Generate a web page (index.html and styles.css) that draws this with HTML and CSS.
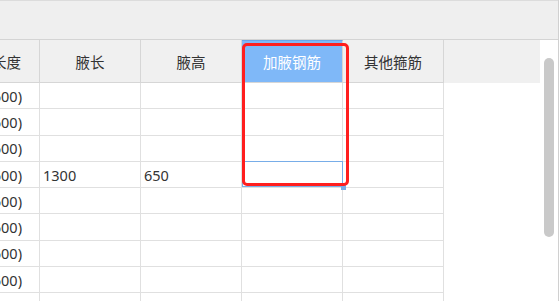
FILE: index.html
```html
<!DOCTYPE html>
<html lang="zh-CN">
<head>
<meta charset="utf-8">
<title>加腋参数</title>
<link rel="stylesheet" href="styles.css">
</head>
<body>
<div class="window">
  <div class="topbar"></div>
  <div class="main">
    <div class="grid">
      <div class="table">
        <div class="hrow">
          <div class="hcell c0">构件长度</div>
          <div class="hcell">腋长</div>
          <div class="hcell">腋高</div>
          <div class="hcell active">加腋钢筋</div>
          <div class="hcell">其他箍筋</div>
          <div class="hfill"></div>
        </div>
        <div class="brow"><div class="bcell c0">1500(600)</div><div class="bcell"></div><div class="bcell"></div><div class="bcell"></div><div class="bcell"></div></div>
        <div class="brow"><div class="bcell c0">1500(600)</div><div class="bcell"></div><div class="bcell"></div><div class="bcell"></div><div class="bcell"></div></div>
        <div class="brow"><div class="bcell c0">1500(600)</div><div class="bcell"></div><div class="bcell"></div><div class="bcell"></div><div class="bcell"></div></div>
        <div class="brow"><div class="bcell c0">1500(600)</div><div class="bcell">1300</div><div class="bcell">650</div><div class="bcell"></div><div class="bcell"></div></div>
        <div class="brow"><div class="bcell c0">1500(600)</div><div class="bcell"></div><div class="bcell"></div><div class="bcell"></div><div class="bcell"></div></div>
        <div class="brow"><div class="bcell c0">1500(600)</div><div class="bcell"></div><div class="bcell"></div><div class="bcell"></div><div class="bcell"></div></div>
        <div class="brow"><div class="bcell c0">1500(600)</div><div class="bcell"></div><div class="bcell"></div><div class="bcell"></div><div class="bcell"></div></div>
        <div class="brow"><div class="bcell c0">1500(600)</div><div class="bcell"></div><div class="bcell"></div><div class="bcell"></div><div class="bcell"></div></div>
        <div class="brow"><div class="bcell c0">1500(600)</div><div class="bcell"></div><div class="bcell"></div><div class="bcell"></div><div class="bcell"></div></div>
      </div>
      <div class="sel"></div>
      <div class="handle"></div>
      <div class="redbox"></div>
    </div>
    <div class="scroll"><div class="thumb"></div></div>
  </div>
</div>
</body>
</html>
```
FILE: styles.css
```css
* { box-sizing: border-box; }
html, body { margin: 0; padding: 0; background: #ffffff; }
body {
  font-family: "Noto Sans", "Noto Sans CJK SC", sans-serif;
  font-size: 14.5px;
  color: #333333;
}
.window {
  width: 559px;
  height: 301px;
  overflow: hidden;
  border-right: 1px solid #d0d0d0;
  display: flex;
  flex-direction: column;
}
.topbar {
  height: 40px;
  flex: none;
  background: #efefef;
  border-top: 1px solid #dcdcdc;
  border-bottom: 1px solid #d4d4d4;
}
.main {
  flex: 1;
  display: flex;
  min-height: 0;
}
.grid {
  width: 540px;
  flex: none;
  position: relative;
  overflow: hidden;
}
.table {
  margin-left: -61px;
}
.hrow {
  display: flex;
  height: 43px;
  background: #f0f0f0;
}
.hcell {
  width: 101px;
  flex: none;
  height: 43px;
  border-right: 1px solid #d6d6d6;
  border-bottom: 1px solid #d6d6d6;
  display: flex;
  align-items: center;
  justify-content: center;
  white-space: nowrap;
}
.hcell.c0 { justify-content: flex-end; padding-right: 18px; }
.hcell.active {
  background: #7fb8f8;
  color: #ffffff;
  border-top: 1px solid #6aa5ea;
}
.hfill { flex: 1; }
.brow {
  display: flex;
  height: 26.3px;
}
.bcell {
  width: 101px;
  flex: none;
  height: 100%;
  border-right: 1px solid #e0e0e0;
  border-bottom: 1px solid #e0e0e0;
  display: flex;
  align-items: center;
  padding-left: 3px;
  white-space: nowrap;
}
.bcell.c0 { justify-content: flex-end; padding-right: 17px; padding-left: 0; }
.sel {
  position: absolute;
  left: 242px;
  top: 121px;
  width: 101px;
  height: 26px;
  border: 1px solid #78ade8;
}
.handle {
  position: absolute;
  left: 341px;
  top: 145px;
  width: 5px;
  height: 5px;
  background: #78ade8;
}
.redbox {
  position: absolute;
  left: 242px;
  top: 3px;
  width: 107px;
  height: 143px;
  border: 3px solid #ff1e1e;
  border-radius: 5px;
}
.scroll {
  width: 18px;
  flex: none;
  padding-top: 18px;
  padding-left: 4px;
}
.thumb {
  width: 10px;
  height: 179px;
  border-radius: 5px;
  background: #c9c9c9;
}
```
